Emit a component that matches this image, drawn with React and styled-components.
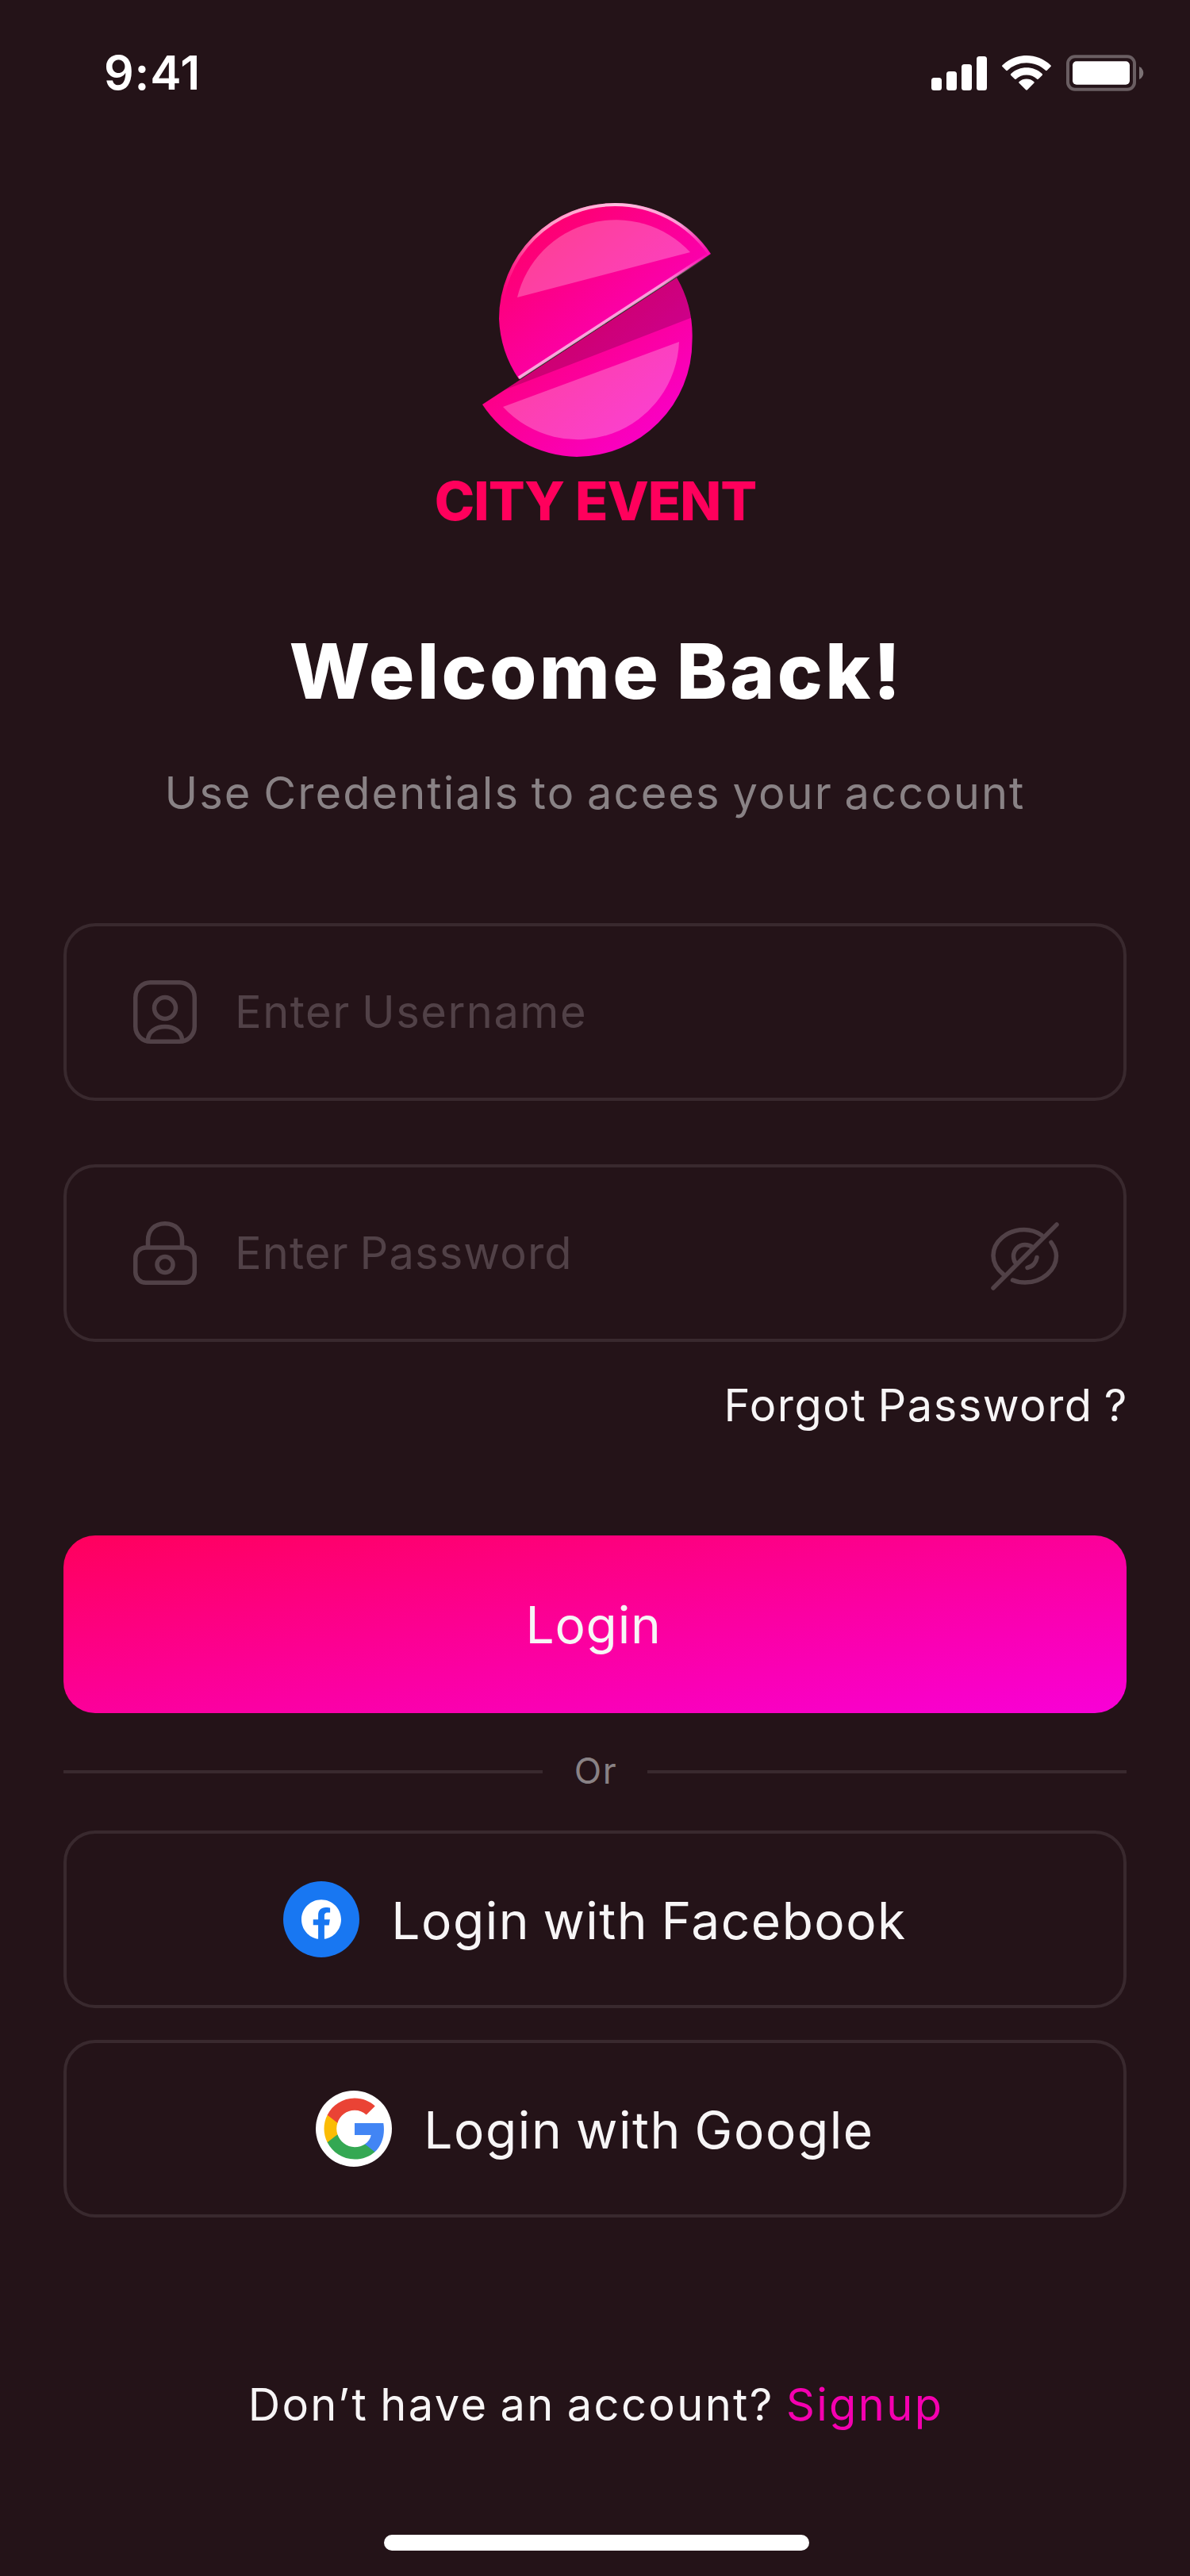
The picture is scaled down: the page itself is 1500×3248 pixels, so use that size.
import React from "react";
import styled, { createGlobalStyle } from "styled-components";

const color = {
  bg: "#241318",
  line: "#39292e",
  faint: "#514147",
  muted: "#898285",
  text: "#f7f5f6",
  brand: "#ff005c",
  accent: "#f500b0",
};

const GlobalStyle = createGlobalStyle`
  *, *::before, *::after { box-sizing: border-box; }
  body {
    margin: 0;
    background: ${color.bg};
    font-family: Inter, "Liberation Sans", sans-serif;
  }
`;

const Screen = styled.main`
  display: flex;
  flex-direction: column;
  width: 1500px;
  height: 3248px;
  overflow: hidden;
  background: ${color.bg};
  color: ${color.text};
`;

const StatusBar = styled.header`
  display: flex;
  align-items: center;
  justify-content: space-between;
  height: 184px;
  padding: 0 58px 0 131px;
`;

const Clock = styled.time`
  font-size: 59px;
  font-weight: 600;
  line-height: 60px;
  letter-spacing: 0.8px;
  color: #fff;
`;

const StatusIcons = styled.div`
  display: flex;
  align-items: center;
  gap: 19px;
`;

const Content = styled.div`
  display: flex;
  flex-direction: column;
  padding: 66px 80px 0;
`;

const Brand = styled.div`
  display: flex;
  flex-direction: column;
  align-items: center;
  gap: 15px;
`;

const BrandName = styled.div`
  padding-left: 1px;
  font-size: 68px;
  font-weight: 800;
  line-height: 72px;
  letter-spacing: -1px;
  color: ${color.brand};
`;

const Title = styled.h1`
  margin: 129px 0 0;
  padding-left: 3px;
  font-size: 96px;
  font-weight: 800;
  line-height: 100px;
  letter-spacing: 3.4px;
  word-spacing: -5px;
  text-align: center;
  color: #fff;
`;

const Subtitle = styled.p`
  margin: 74px 0 0;
  font-size: 56px;
  line-height: 60px;
  letter-spacing: 2.05px;
  word-spacing: -3px;
  text-align: center;
  white-space: nowrap;
  color: ${color.muted};
`;

const Fields = styled.div`
  display: flex;
  flex-direction: column;
  gap: 80px;
  margin-top: 134px;
`;

const Field = styled.label`
  display: flex;
  align-items: center;
  gap: 48px;
  height: 224px;
  padding: 0 80px 0 84px;
  border: 4px solid ${color.line};
  border-radius: 40px;
  color: ${color.faint};
`;

const Placeholder = styled.span`
  flex: 1;
  font-size: 56px;
  line-height: 60px;
  letter-spacing: ${(p) => p.$tracking}px;
  word-spacing: -3px;
`;

const EyeSlot = styled.span`
  display: flex;
  padding-top: 8px;
`;

const Forgot = styled.a`
  align-self: flex-end;
  margin: 50px -2px 0 0;
  font-size: 56px;
  line-height: 60px;
  letter-spacing: 1.5px;
  word-spacing: -3px;
`;

const Button = styled.button`
  display: flex;
  align-items: center;
  justify-content: center;
  gap: 40px;
  width: 100%;
  height: 224px;
  padding: 4px 0 0;
  border: 4px solid ${color.line};
  border-radius: 40px;
  background: transparent;
  font-family: inherit;
  font-size: 64px;
  line-height: 70px;
  letter-spacing: ${(p) => p.$tracking}px;
  word-spacing: -3px;
  color: ${color.text};
`;

const PrimaryButton = styled(Button)`
  margin-top: 134px;
  padding: 2px 4px 0 0;
  border: 0;
  background: linear-gradient(to bottom right, #ff005c, #f800d8);
`;

const Divider = styled.div`
  display: flex;
  align-items: center;
  margin: 44px 0;
  font-size: 45px;
  line-height: 60px;
  letter-spacing: 1.5px;
  color: ${color.muted};

  &::before,
  &::after {
    content: "";
    flex: 1;
    height: 4px;
    background: ${color.line};
  }
`;

const DividerLabel = styled.span`
  width: 132px;
  padding: 1px 0 3px 2px;
  line-height: 56px;
  text-align: center;
`;

const Providers = styled.div`
  display: flex;
  flex-direction: column;
  gap: 40px;
`;

const ProviderIcon = styled.svg`
  flex: none;
  width: 96px;
  height: 96px;
  margin-top: -4px;
`;

const Footer = styled.p`
  margin: 206px 0 0;
  padding-left: 2px;
  font-size: 56px;
  line-height: 60px;
  letter-spacing: 2.35px;
  word-spacing: -3px;
  text-align: center;
  white-space: nowrap;
`;

const SignupLink = styled.a`
  color: ${color.accent};
`;

const HomeIndicator = styled.div`
  align-self: center;
  width: 536px;
  height: 20px;
  margin: 134px 0 0 4px;
  border-radius: 10px;
  background: #fff;
`;

const Signal = () => (
  <svg width="70" height="43" viewBox="0 0 70 43" fill="#fff">
    <rect x="0" y="27" width="13" height="16" rx="3.5" />
    <rect x="19" y="19" width="13" height="24" rx="3.5" />
    <rect x="38" y="10" width="13" height="33" rx="3.5" />
    <rect x="57" y="0" width="13" height="43" rx="3.5" />
  </svg>
);

const Wifi = () => (
  <svg width="62" height="44" viewBox="0 0 15.3 10.9" fill="#fff">
    <path d="M7.637 2.277c2.216 0 4.347.852 5.953 2.379.12.118.314.116.433-.004l1.156-1.166a.32.32 0 0 0-.003-.456c-4.215-4.04-10.865-4.04-15.08 0a.32.32 0 0 0-.003.456L1.25 4.652c.119.12.312.122.433.004a8.63 8.63 0 0 1 5.954-2.379Z" />
    <path d="M7.637 6.073c1.217 0 2.391.453 3.294 1.27.122.116.314.113.433-.006l1.155-1.167a.32.32 0 0 0-.005-.459c-2.748-2.556-7.004-2.556-9.752 0a.32.32 0 0 0-.005.459l1.155 1.167c.119.119.311.122.433.006a4.9 4.9 0 0 1 3.292-1.27Z" />
    <path d="M9.95 8.627a.32.32 0 0 0-.01-.459 3.57 3.57 0 0 0-4.607 0 .32.32 0 0 0-.01.459l2.098 2.116a.32.32 0 0 0 .464 0L9.95 8.627Z" />
  </svg>
);

const Battery = () => (
  <svg width="98" height="46" viewBox="0 0 98 46" fill="none">
    <rect x="2" y="2.3" width="84" height="41.4" rx="9" stroke="#fff" strokeOpacity=".32" strokeWidth="4" />
    <rect x="8" y="8.3" width="72" height="29.4" rx="5" fill="#fff" />
    <path d="M92 15v16c3.2-1.4 5.3-4.5 5.3-8s-2.1-6.6-5.3-8Z" fill="#fff" fillOpacity=".4" />
  </svg>
);

const Logo = () => (
  <svg width="300" height="330" viewBox="0 0 300 330" fill="none">
    <defs>
      <linearGradient id="body" x1="0" y1="0" x2="1" y2="1">
        <stop offset="0" stopColor="#ff005c" />
        <stop offset="1" stopColor="#f800d8" />
      </linearGradient>
      <linearGradient id="rim" gradientUnits="userSpaceOnUse" x1="34" y1="0" x2="296" y2="0">
        <stop offset="0" stopColor="#fff" stopOpacity="0" />
        <stop offset=".2" stopColor="#fff" stopOpacity=".6" />
        <stop offset=".55" stopColor="#fff" stopOpacity=".75" />
        <stop offset=".85" stopColor="#fff" stopOpacity=".6" />
        <stop offset="1" stopColor="#fff" stopOpacity="0" />
      </linearGradient>
      <linearGradient id="cut" gradientUnits="userSpaceOnUse" x1="54" y1="228" x2="296" y2="70">
        <stop offset="0" stopColor="#fff" stopOpacity=".65" />
        <stop offset=".75" stopColor="#fff" stopOpacity=".6" />
        <stop offset="1" stopColor="#fff" stopOpacity="0" />
      </linearGradient>
      <clipPath id="lower">
        <path d="M8 260A146 146 0 0 0 127 326 146 146 0 0 0 272.5 180 146 146 0 0 0 253 100Z" />
      </clipPath>
    </defs>
    <path d="M8 260A146 146 0 0 0 127 326 146 146 0 0 0 272.5 180 146 146 0 0 0 253 100Z" fill="url(#body)" />
    <path d="M300 60V139.5L12 251 0 270V200Z" fill="#000" fillOpacity=".18" clipPath="url(#lower)" />
    <path d="M34 263 256 181A128 128 0 0 1 34 263Z" fill="#fff" fillOpacity=".25" />
    <path d="M296 70A146 146 0 0 0 175 6 146 146 0 0 0 29 152 146 146 0 0 0 54 228Z" fill="url(#body)" />
    <path d="M52 125 270 68A128 128 0 0 0 52 125Z" fill="#fff" fillOpacity=".25" />
    <path d="M294 70A144 144 0 0 0 175 8 144 144 0 0 0 31 152" stroke="url(#rim)" strokeWidth="4" />
    <path d="M54 226.5 295 69.5" stroke="url(#cut)" strokeWidth="4" />
  </svg>
);

const UserIcon = () => (
  <svg width="80" height="80" viewBox="0 0 80 80" fill="none" stroke="currentColor" strokeWidth="5.5">
    <rect x="2.75" y="2.75" width="74.5" height="74.5" rx="19" />
    <circle cx="40" cy="35" r="13.5" />
    <path d="M18.5 75.5C18.5 65.5 28 58.5 40 58.5s21.5 7 21.5 17" />
  </svg>
);

const LockIcon = () => (
  <svg width="80" height="80" viewBox="0 0 80 80" fill="none" stroke="currentColor" strokeWidth="5.5">
    <rect x="2.75" y="33" width="74.5" height="44.25" rx="13" />
    <path d="M18.5 33V24C18.5 11 27 2.75 40 2.75S61.5 11 61.5 24v9" />
    <circle cx="40" cy="54.5" r="10" />
  </svg>
);

const EyeOffIcon = () => (
  <svg width="88" height="88" viewBox="0 0 88 88" fill="none" stroke="currentColor" strokeWidth="5.5" strokeLinecap="round">
    <path d="M4 84 84 4" />
    <path d="M65 17.5C58 12.5 51 10.5 43 10.5 21 10.5 4 26 4 43c0 9 5 17.5 13 24" />
    <path d="M77 26.5c4 5.5 6.5 11 6.5 17C83.5 61 66 77 44 77c-6 0-11-1-15.5-3" />
    <path d="M54 33C51 30.5 48 29.5 44 29.5 36 29.5 29.5 36 29.5 44c0 4 1.5 7.5 4 10" />
    <path d="M59 45.5c-1 6.5-5.5 11.5-12 13" />
  </svg>
);

const FacebookIcon = () => (
  <ProviderIcon viewBox="0 0 96 96">
    <circle cx="48" cy="48" r="48" fill="#1877f2" />
    <path
      transform="translate(23 23) scale(2.083)"
      fill="#fff"
      d="M24 12.073c0-6.627-5.373-12-12-12s-12 5.373-12 12c0 5.99 4.388 10.954 10.125 11.854v-8.385H7.078v-3.47h3.047V9.43c0-3.007 1.792-4.669 4.533-4.669 1.312 0 2.686.235 2.686.235v2.953H15.83c-1.491 0-1.956.925-1.956 1.874v2.25h3.328l-.532 3.47h-2.796v8.385C19.612 23.027 24 18.062 24 12.073z"
    />
  </ProviderIcon>
);

const GoogleIcon = () => (
  <ProviderIcon viewBox="0 0 96 96">
    <circle cx="48" cy="48" r="48" fill="#fff" />
    <g transform="translate(7 6) scale(3.5)">
      <path fill="#4285f4" d="M22.56 12.25c0-.78-.07-1.53-.2-2.25H12v4.26h5.92c-.26 1.37-1.04 2.53-2.21 3.31v2.77h3.57c2.08-1.92 3.28-4.74 3.28-8.09z" />
      <path fill="#34a853" d="M12 23c2.97 0 5.46-.98 7.28-2.66l-3.57-2.77c-.98.66-2.23 1.06-3.71 1.06-2.86 0-5.29-1.93-6.16-4.53H2.18v2.84C3.99 20.53 7.7 23 12 23z" />
      <path fill="#fbbc05" d="M5.84 14.09c-.22-.66-.35-1.36-.35-2.09s.13-1.43.35-2.09V7.07H2.18C1.43 8.55 1 10.22 1 12s.43 3.45 1.18 4.93l3.66-2.84z" />
      <path fill="#ea4335" d="M12 5.38c1.62 0 3.06.56 4.21 1.64l3.15-3.15C17.45 2.09 14.97 1 12 1 7.7 1 3.99 3.47 2.18 7.07l3.66 2.84c.87-2.6 3.3-4.53 6.16-4.53z" />
    </g>
  </ProviderIcon>
);

export default function App() {
  return (
    <>
      <GlobalStyle />
      <Screen>
        <StatusBar>
          <Clock>9:41</Clock>
          <StatusIcons>
            <Signal />
            <Wifi />
            <Battery />
          </StatusIcons>
        </StatusBar>
        <Content>
          <Brand>
            <Logo />
            <BrandName>CITY EVENT</BrandName>
          </Brand>
          <Title>Welcome Back!</Title>
          <Subtitle>Use Credentials to acees your account</Subtitle>
          <Fields>
            <Field>
              <UserIcon />
              <Placeholder $tracking={1.5}>Enter Username</Placeholder>
            </Field>
            <Field>
              <LockIcon />
              <Placeholder $tracking={1.1}>Enter Password</Placeholder>
              <EyeSlot>
                <EyeOffIcon />
              </EyeSlot>
            </Field>
          </Fields>
          <Forgot>Forgot Password ?</Forgot>
          <PrimaryButton $tracking={0.8}>Login</PrimaryButton>
          <Divider>
            <DividerLabel>Or</DividerLabel>
          </Divider>
          <Providers>
            <Button $tracking={1.5}>
              <FacebookIcon />
              Login with Facebook
            </Button>
            <Button $tracking={1.6}>
              <GoogleIcon />
              Login with Google
            </Button>
          </Providers>
          <Footer>
            Don’t have an account? <SignupLink>Signup</SignupLink>
          </Footer>
        </Content>
        <HomeIndicator />
      </Screen>
    </>
  );
}
